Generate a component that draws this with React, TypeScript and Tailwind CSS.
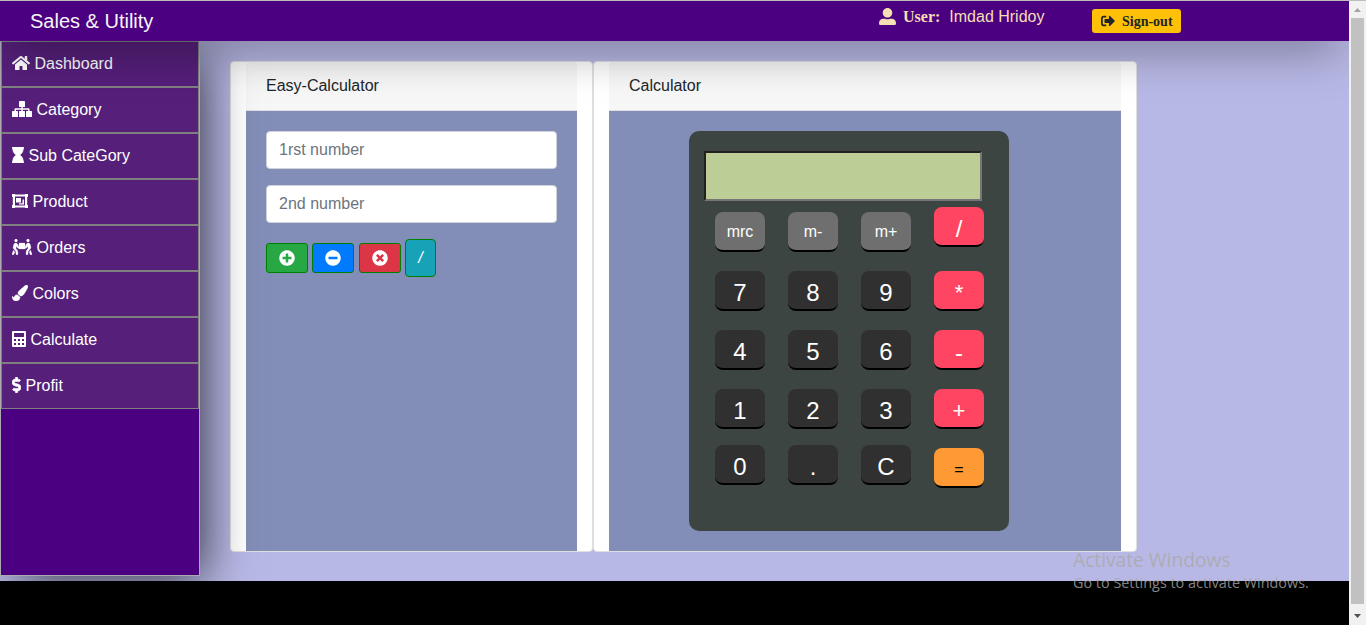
import type { ReactNode } from 'react';
import {
  FaHome,
  FaHourglass,
  FaPeopleCarry,
  FaPaintBrush,
  FaDollarSign,
  FaUserAlt,
  FaSignOutAlt,
  FaPlusCircle,
  FaMinusCircle,
  FaTimesCircle,
} from 'react-icons/fa';

function SitemapIcon() {
  return (
    <svg className="mb-0.5 h-4 w-5" viewBox="0 0 20 16" fill="currentColor">
      <rect x="7" y="0" width="6" height="6" rx=".5" />
      <rect x="0" y="10" width="6" height="6" rx=".5" />
      <rect x="7" y="10" width="6" height="6" rx=".5" />
      <rect x="14" y="10" width="6" height="6" rx=".5" />
      <path d="M9.300 6h1.400v1.300h5.800q1 0 1 1V10h-1.500V8.700h-5.300V10H9.300V8.700H4V10H2.500V8.300q0-1 1-1h5.800z" />
    </svg>
  );
}

function GroupIcon() {
  return (
    <svg className="mb-0.5 h-4 w-4" viewBox="0 0 16 16" fill="currentColor">
      <path fillRule="evenodd" d="M0 1h3v.5h10V1h3v3h-.8v8h.8v3h-3v-.5H3v.5H0v-3h.8V4H0zM3 3.500v9h10v-9z" />
      <path d="M4 5h5v4.500H4zM10.500 6.500H12v5H7v-1.200h3.500z" />
    </svg>
  );
}

function CalculatorIcon() {
  return (
    <svg className="mb-0.5 h-4 w-3.5" viewBox="0 0 14 16" fill="currentColor">
      <path fillRule="evenodd" d="M1 0h12q1 0 1 1v14q0 1-1 1H1q-1 0-1-1V1q0-1 1-1zM2 2v4h10V2zM2 8v2h2V8zM6 8v2h2V8zM10 8v2h2V8zM2 12v2h2v-2zM6 12v2h2v-2zM10 12v2h2v-2z" />
    </svg>
  );
}

const navItems: { label: string; icon: ReactNode }[] = [
  { label: 'Dashboard', icon: <FaHome className="mb-0.5 h-4 w-[18px]" /> },
  { label: 'Category', icon: <SitemapIcon /> },
  { label: 'Sub CateGory', icon: <FaHourglass className="mb-0.5 h-4 w-3" stroke="currentColor" strokeWidth={16} /> },
  { label: 'Product', icon: <GroupIcon /> },
  { label: 'Orders', icon: <FaPeopleCarry className="mb-0.5 h-4 w-5" stroke="currentColor" strokeWidth={8} /> },
  { label: 'Colors', icon: <FaPaintBrush className="mb-0.5 h-4 w-4" stroke="currentColor" strokeWidth={12} /> },
  { label: 'Calculate', icon: <CalculatorIcon /> },
  { label: 'Profit', icon: <FaDollarSign className="mb-0.5 h-4 w-[9px]" stroke="currentColor" strokeWidth={20} /> },
];

const memory = 'bg-[#6f6f6f] text-white text-base pt-0.5';
const digit = 'bg-[#303030] text-white text-2xl pt-1.5';
const operator = 'bg-[#ff4561] text-white text-[22px] pt-1.5';
const equals = 'bg-[#ff9933] text-black text-base pt-1.5';

const rows: { gap: string; keys: [string, string][] }[] = [
  { gap: 'mt-1.5', keys: [['mrc', `${memory} mt-[5px]`], ['m-', `${memory} mt-[5px]`], ['m+', `${memory} mt-[5px]`], ['/', 'bg-[#ff4561] text-white text-2xl pt-1.5']] },
  { gap: 'mt-[19px]', keys: [['7', digit], ['8', digit], ['9', digit], ['*', operator]] },
  { gap: 'mt-[19px]', keys: [['4', digit], ['5', digit], ['6', digit], ['-', 'bg-[#ff4561] text-white text-2xl pt-2']] },
  { gap: 'mt-[19px]', keys: [['1', digit], ['2', digit], ['3', digit], ['+', operator]] },
  { gap: 'mt-4', keys: [['0', digit], ['.', digit], ['C', digit], ['=', `${equals} mt-[3px]`]] },
];

function Header() {
  return (
    <header className="relative z-20 flex h-10 shrink-0 bg-[#4b0082] shadow-[0_12px_48px_-8px_rgba(0,0,0,0.55)]">
      <h1 className="w-[879px] pl-[30px] pt-[5px] text-xl leading-[30px] text-[#f5f5f5]">Sales &amp; Utility</h1>
      <div className="flex w-[213px] pt-1 leading-6 text-[#f5deb3]">
        <FaUserAlt className="mt-[3px] h-[17px] w-[17px]" />
        <b className="ml-[7px] font-['Liberation_Serif',serif] text-base leading-6">User:</b>
        <span className="ml-[9px]">Imdad Hridoy</span>
      </div>
      <button className="mt-2 flex h-6 w-[89px] items-center rounded-[3px] bg-[#ffc107] pl-[9px] pt-px font-['Liberation_Serif',serif] text-sm font-bold text-[#212529]">
        <FaSignOutAlt className="mb-0.5 mr-[7px] h-3.5 w-3.5" />
        Sign-out
      </button>
    </header>
  );
}

function Sidebar() {
  return (
    <nav className="relative z-10 h-[535px] w-[200px] shrink-0 border border-t-0 border-[#a9a9b0] bg-[#4b0082] shadow-[10px_10px_46px_-7px_rgba(0,0,0,0.75)]">
      {navItems.map((item) => (
        <a key={item.label} className="flex h-[46px] items-center gap-[4.5px] border border-[#808080] bg-[#551f7a] pl-2.5 text-white">
          {item.icon}
          <span>{item.label}</span>
        </a>
      ))}
    </nav>
  );
}

function Card({ title, width, children }: { title: string; width: string; children: ReactNode }) {
  return (
    <section className={`flex h-[491px] flex-col rounded border border-[#dfdfdf] bg-white px-[15px] ${width}`}>
      <h2 className="h-[49px] shrink-0 rounded-t-[3px] border-b border-[#dfdfdf] bg-[#f7f7f7] px-5 py-3 leading-6 text-[#212529]">{title}</h2>
      <div className="grow bg-[#838eb8] p-5">{children}</div>
    </section>
  );
}

const field = 'block h-[38px] w-full rounded border border-[#ced4da] bg-white px-3 text-base placeholder:text-[#6c757d] placeholder:opacity-100';

function EasyCalculator() {
  return (
    <>
      <input className={field} placeholder="1rst number" />
      <input className={`${field} mt-4`} placeholder="2nd number" />
      <div className="mt-4 flex items-center text-white">
        <button className="flex h-[30px] w-[42px] items-center justify-center rounded-[3px] border border-[green] bg-[#28a745]"><FaPlusCircle /></button>
        <button className="ml-1 flex h-[30px] w-[42px] items-center justify-center rounded-[3px] border border-[green] bg-[#007bff]"><FaMinusCircle /></button>
        <button className="ml-[5px] flex h-[30px] w-[42px] items-center justify-center rounded-[3px] border border-[green] bg-[#dc3545]"><FaTimesCircle /></button>
        <button className="ml-1 h-[38px] w-[31px] rounded border border-[green] bg-[#17a2b8] text-base italic">/</button>
      </div>
    </>
  );
}

function Calculator() {
  return (
    <div className="ml-[60px] h-[400px] w-80 rounded-[10px] bg-[#3d4543] pt-5">
      <div className="ml-[15px] h-[50px] w-[278px] border-2 border-b-[#767676] border-l-[#212121] border-r-[#767676] border-t-[#212121] bg-[#bccd95]" />
      {rows.map((row) => (
        <div key={row.keys[0][0]} className={`ml-[26px] flex items-start gap-[23px] ${row.gap}`}>
          {row.keys.map(([label, style]) => (
            <button key={label} className={`flex h-10 w-[50px] items-center justify-center rounded-lg border-b-2 border-black leading-6 ${style}`}>{label}</button>
          ))}
        </div>
      ))}
    </div>
  );
}

function Scrollbar() {
  return (
    <div className="flex h-[624px] w-[17px] shrink-0 flex-col items-center bg-[#f1f1f1]">
      <svg className="h-[17px] w-[17px]" viewBox="0 0 17 17"><path d="M5 11h7L8.500 7z" fill="#a3a3a3" /></svg>
      <div className="h-[586px] w-[13px] bg-[#c1c1c1]" />
      <svg className="mt-1 h-[17px] w-[17px]" viewBox="0 0 17 17"><path d="M5 6h7L8.500 10z" fill="#505050" /></svg>
    </div>
  );
}

export default function App() {
  return (
    <div className="relative flex h-[625px] w-[1366px] overflow-hidden border-t border-[#bdbdbd] bg-black font-['Liberation_Sans',sans-serif] text-base">
      <div className="w-[1349px]">
        <div className="flex h-[580px] flex-col overflow-hidden bg-[#b8b8e6]">
          <Header />
          <div className="flex">
            <Sidebar />
            <main className="ml-[30px] mt-5 flex">
              <Card title="Easy-Calculator" width="w-[363px]"><EasyCalculator /></Card>
              <Card title="Calculator" width="w-[544px]"><Calculator /></Card>
            </main>
          </div>
        </div>
      </div>
      <Scrollbar />
      <div className="pointer-events-none absolute left-[1073px] top-[547px] z-30 whitespace-nowrap font-['Open_Sans',sans-serif] text-[#a8a8a8]/80">
        <p className="text-[19.2px] leading-6">Activate Windows</p>
        <p className="text-[14.4px] leading-[22px]">Go to Settings to activate Windows.</p>
      </div>
    </div>
  );
}
